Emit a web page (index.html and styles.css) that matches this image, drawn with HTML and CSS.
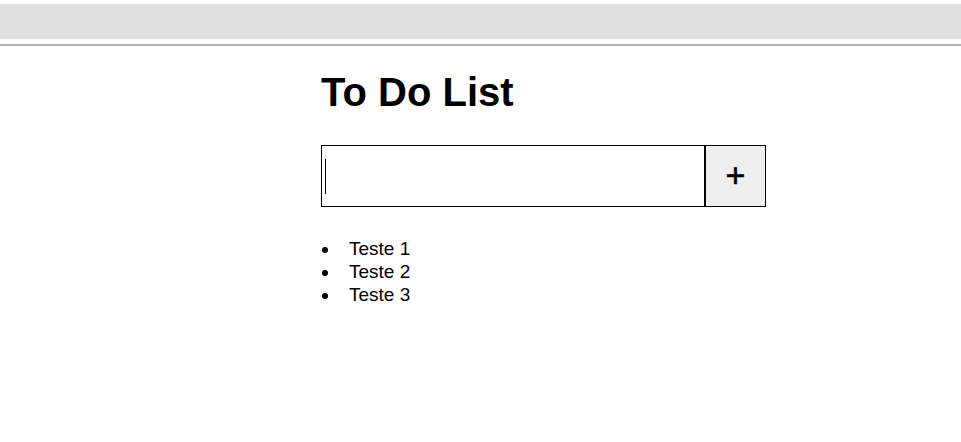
FILE: index.html
```html
<!DOCTYPE html>
<html>
<head>
<meta charset="utf-8">
<link rel="stylesheet" href="styles.css">
</head>
<body>
<div class="topbar"></div>
<div class="rule"></div>
<main class="app">
  <h1 class="title">To Do List</h1>
  <form class="add-form">
    <div class="task-input"><span class="caret"></span></div>
    <button class="add-btn" type="button">+</button>
  </form>
  <ul class="tasks">
    <li>Teste 1</li>
    <li>Teste 2</li>
    <li>Teste 3</li>
  </ul>
</main>
</body>
</html>
```
FILE: styles.css
```css
html, body {
  margin: 0;
  padding: 0;
  background: #fff;
  font-family: "Liberation Sans", Arial, sans-serif;
  color: #000;
}
.topbar {
  margin-top: 4px;
  height: 35px;
  background: #e0e0e0;
}
.rule {
  margin-top: 5px;
  height: 2px;
  background: #b0b0b0;
}
.app {
  padding-left: 321px;
}
.title {
  margin: 23px 0 0 0;
  font-size: 40px;
  line-height: 46px;
  font-weight: bold;
}
.add-form {
  margin: 30px 0 0 0;
  display: flex;
}
.task-input {
  box-sizing: border-box;
  width: 383px;
  height: 62px;
  border: 1px solid #000;
  border-right: 0;
  background: #fff;
  display: flex;
  align-items: center;
  padding-left: 3px;
}
.caret {
  display: block;
  width: 1px;
  height: 35px;
  background: #000;
}
.add-btn {
  box-sizing: border-box;
  width: 62px;
  height: 62px;
  border: 1px solid #000;
  border-left-width: 2px;
  background: #efefef;
  font-family: "Liberation Sans", Arial, sans-serif;
  font-size: 34px;
  line-height: 1;
  padding: 0 0 3px 0;
  color: #000;
  -webkit-text-stroke: 0.6px #000;
}
.tasks {
  margin: 30px 0 0 0;
  padding-left: 19px;
  font-size: 19px;
  line-height: 23px;
}
.tasks li {
  padding-left: 9px;
}
```
